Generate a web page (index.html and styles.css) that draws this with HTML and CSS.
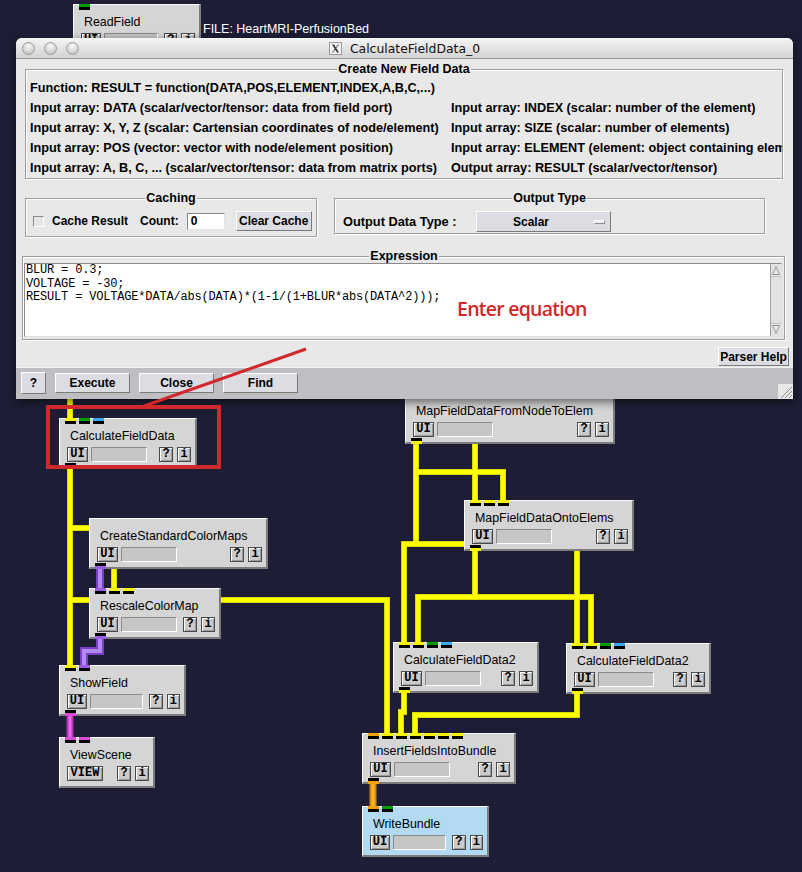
FILE: index.html
```html
<!DOCTYPE html>
<html>
<head>
<meta charset="utf-8">
<title>SCIRun network</title>
<link rel="stylesheet" href="styles.css">
</head>
<body>
<div class="canvas">
  <svg class="wires" width="802" height="872" viewBox="0 0 802 872">
    <defs>
      <path id="y1" d="M70 395V668"/>
      <path id="y2" d="M70 528H114V591"/>
      <path id="y3" d="M70 600H387V736"/>
      <path id="y4" d="M416 440V544H404V645"/>
      <path id="y5" d="M416 544H577V646"/>
      <path id="y6" d="M416 472H503V503"/>
      <path id="y7" d="M475 430V503"/>
      <path id="y8" d="M475 549V597H418V645"/>
      <path id="y9" d="M475 597H591V646"/>
      <path id="y10" d="M404 690V712H401V736"/>
      <path id="y11" d="M577 691V715H415V736"/>
      <path id="p1" d="M100 567V591"/>
      <path id="p2" d="M100 637V651H84V668"/>
      <path id="m1" d="M70 714V740"/>
      <path id="o1" d="M373 782V809"/>
    </defs>
    <g class="yo">
      <use href="#y1"/><use href="#y2"/><use href="#y3"/><use href="#y4"/><use href="#y5"/><use href="#y6"/>
      <use href="#y7"/><use href="#y8"/><use href="#y9"/><use href="#y10"/><use href="#y11"/>
    </g>
    <g class="yi">
      <use href="#y1"/><use href="#y2"/><use href="#y3"/><use href="#y4"/><use href="#y5"/><use href="#y6"/>
      <use href="#y7"/><use href="#y8"/><use href="#y9"/><use href="#y10"/><use href="#y11"/>
    </g>
    <g class="po"><use href="#p1"/><use href="#p2"/></g>
    <g class="pi"><use href="#p1"/><use href="#p2"/></g>
    <g class="mo"><use href="#m1"/></g>
    <g class="mi"><use href="#m1"/></g>
    <g class="oo"><use href="#o1"/></g>
    <g class="oi"><use href="#o1"/></g>
  </svg>

  <div class="filelabel" style="left:203px;top:22px">FILE: HeartMRI-PerfusionBed</div>

  <div class="mod" style="left:73px;top:4px;width:128px">
    <div class="ports top"><i class="p g"></i></div>
    <div class="mtitle">ReadField</div>
    <div class="mrow"><span class="mbtn ui">UI</span><span class="prog"></span><span class="fill"></span><span class="mbtn sq">?</span><span class="mbtn sq last">i</span></div>
  </div>

  <div class="mod" style="left:59px;top:418px;width:138px">
    <div class="ports top"><i class="p y"></i><i class="p g"></i><i class="p b"></i></div>
    <div class="mtitle">CalculateFieldData</div>
    <div class="mrow"><span class="mbtn ui">UI</span><span class="prog"></span><span class="fill"></span><span class="mbtn sq">?</span><span class="mbtn sq last">i</span></div>
    <div class="ports bot"><i class="p y"></i></div>
  </div>

  <div class="mod" style="left:89px;top:518px;width:179px">
    <div class="mtitle">CreateStandardColorMaps</div>
    <div class="mrow"><span class="mbtn ui">UI</span><span class="prog"></span><span class="fill"></span><span class="mbtn sq">?</span><span class="mbtn sq last">i</span></div>
    <div class="ports bot"><i class="p pu"></i></div>
  </div>

  <div class="mod" style="left:89px;top:588px;width:132px">
    <div class="ports top"><i class="p pu"></i><i class="p y"></i><i class="p y"></i></div>
    <div class="mtitle">RescaleColorMap</div>
    <div class="mrow"><span class="mbtn ui">UI</span><span class="prog"></span><span class="fill"></span><span class="mbtn sq">?</span><span class="mbtn sq last">i</span></div>
    <div class="ports bot"><i class="p pu"></i></div>
  </div>

  <div class="mod" style="left:59px;top:665px;width:127px">
    <div class="ports top"><i class="p y"></i><i class="p pu"></i></div>
    <div class="mtitle">ShowField</div>
    <div class="mrow"><span class="mbtn ui">UI</span><span class="prog"></span><span class="fill"></span><span class="mbtn sq">?</span><span class="mbtn sq last">i</span></div>
    <div class="ports bot"><i class="p m"></i></div>
  </div>

  <div class="mod" style="left:59px;top:737px;width:96px">
    <div class="ports top"><i class="p m"></i><i class="p m"></i></div>
    <div class="mtitle">ViewScene</div>
    <div class="mrow"><span class="mbtn view">VIEW</span><span class="fill"></span><span class="mbtn sq">?</span><span class="mbtn sq last">i</span></div>
  </div>

  <div class="mod" style="left:405px;top:393px;width:210px">
    <div class="mtitle">MapFieldDataFromNodeToElem</div>
    <div class="mrow"><span class="mbtn ui">UI</span><span class="prog"></span><span class="fill"></span><span class="mbtn sq">?</span><span class="mbtn sq last">i</span></div>
    <div class="ports bot"><i class="p y"></i></div>
  </div>

  <div class="mod" style="left:464px;top:500px;width:170px">
    <div class="ports top"><i class="p y"></i><i class="p y"></i><i class="p y"></i></div>
    <div class="mtitle">MapFieldDataOntoElems</div>
    <div class="mrow"><span class="mbtn ui">UI</span><span class="prog"></span><span class="fill"></span><span class="mbtn sq">?</span><span class="mbtn sq last">i</span></div>
    <div class="ports bot"><i class="p y"></i></div>
  </div>

  <div class="mod" style="left:393px;top:642px;width:146px">
    <div class="ports top"><i class="p y"></i><i class="p y"></i><i class="p g"></i><i class="p b"></i></div>
    <div class="mtitle">CalculateFieldData2</div>
    <div class="mrow"><span class="mbtn ui">UI</span><span class="prog"></span><span class="fill"></span><span class="mbtn sq">?</span><span class="mbtn sq last">i</span></div>
    <div class="ports bot"><i class="p y"></i></div>
  </div>

  <div class="mod" style="left:566px;top:643px;width:145px">
    <div class="ports top"><i class="p y"></i><i class="p y"></i><i class="p g"></i><i class="p b"></i></div>
    <div class="mtitle">CalculateFieldData2</div>
    <div class="mrow"><span class="mbtn ui">UI</span><span class="prog"></span><span class="fill"></span><span class="mbtn sq">?</span><span class="mbtn sq last">i</span></div>
    <div class="ports bot"><i class="p y"></i></div>
  </div>

  <div class="mod" style="left:362px;top:733px;width:154px">
    <div class="ports top"><i class="p o"></i><i class="p y"></i><i class="p y"></i><i class="p y"></i><i class="p y"></i><i class="p y"></i><i class="p y"></i></div>
    <div class="mtitle">InsertFieldsIntoBundle</div>
    <div class="mrow"><span class="mbtn ui">UI</span><span class="prog"></span><span class="fill"></span><span class="mbtn sq">?</span><span class="mbtn sq last">i</span></div>
    <div class="ports bot"><i class="p o"></i></div>
  </div>

  <div class="mod blue" style="left:362px;top:806px;width:127px">
    <div class="ports top"><i class="p o"></i><i class="p g"></i></div>
    <div class="mtitle">WriteBundle</div>
    <div class="mrow"><span class="mbtn ui">UI</span><span class="prog"></span><span class="fill"></span><span class="mbtn sq">?</span><span class="mbtn sq last">i</span></div>
  </div>

  <div class="dialog">
    <div class="titlebar">
      <div class="lights"><i class="light"></i><i class="light"></i><i class="light"></i></div>
      <div class="ttl">
        <svg class="xlogo" width="13" height="13" viewBox="0 0 13 13">
          <rect x="0.5" y="0.5" width="12" height="12" fill="#f2f2f2" stroke="#9a9a9a"/>
          <path d="M3 2.5h2l5 8h-2z" fill="#333"/>
          <path d="M9.5 2.5L3.5 10.5" stroke="#333" stroke-width="0.9"/>
        </svg>
        <span>CalculateFieldData_0</span>
      </div>
      <div class="tspace"></div>
    </div>
    <div class="dbody">
      <div class="box info">
        <div class="leg">Create New Field Data</div>
        <div class="infogrid">
          <div>Function: RESULT = function(DATA,POS,ELEMENT,INDEX,A,B,C,...)</div><div></div>
          <div>Input array: DATA (scalar/vector/tensor: data from field port)</div><div>Input array: INDEX (scalar: number of the element)</div>
          <div>Input array: X, Y, Z (scalar: Cartensian coordinates of node/element)</div><div>Input array: SIZE (scalar: number of elements)</div>
          <div>Input array: POS (vector: vector with node/element position)</div><div>Input array: ELEMENT (element: object containing element properties)</div>
          <div>Input array: A, B, C, ... (scalar/vector/tensor: data from matrix ports)</div><div>Output array: RESULT (scalar/vector/tensor)</div>
        </div>
      </div>
      <div class="row2">
        <div class="box caching">
          <div class="leg">Caching</div>
          <div class="crow">
            <span class="chk"></span>
            <span>Cache Result</span>
            <span class="cnt">Count:</span>
            <span class="count">0</span>
            <span class="btn cc">Clear Cache</span>
          </div>
        </div>
        <div class="box otype">
          <div class="leg">Output Type</div>
          <div class="orow">
            <span class="olabel">Output Data Type :</span>
            <span class="menubtn"><span>Scalar</span><i class="ind"></i></span>
          </div>
        </div>
      </div>
      <div class="box expr">
        <div class="leg">Expression</div>
        <div class="tbox">
<pre class="code">BLUR = 0.3;
VOLTAGE = -30;
RESULT = VOLTAGE*DATA/abs(DATA)*(1-1/(1+BLUR*abs(DATA^2)));</pre>
          <div class="sbar">
            <svg class="arr" width="10" height="12" viewBox="0 0 10 12"><path d="M1.5 10.5L5 2.5L8.5 10.5Z" fill="#e6e6e6" stroke="#9a9a9a"/></svg>
            <div class="trough"></div>
            <svg class="arr" width="10" height="12" viewBox="0 0 10 12"><path d="M1.5 1.5L5 9.5L8.5 1.5Z" fill="#e6e6e6" stroke="#9a9a9a"/></svg>
          </div>
        </div>
      </div>
      <div class="phrow"><span class="btn ph">Parser Help</span></div>
    </div>
    <div class="bbar">
      <span class="btn qb">?</span>
      <span class="btn bb">Execute</span>
      <span class="btn bb">Close</span>
      <span class="btn bb">Find</span>
      <svg class="grip" width="15" height="15" viewBox="0 0 15 15">
        <rect width="15" height="15" fill="#e8e8e9"/>
        <path d="M3 14L14 3M7 14L14 7M11 14L14 11" stroke="#8c8c8c" stroke-width="1"/>
      </svg>
    </div>
  </div>

  <svg class="annot" width="802" height="872" viewBox="0 0 802 872">
    <line x1="306" y1="349" x2="144" y2="406" stroke="#d1282c" stroke-width="3"/>
    <rect x="48" y="407" width="171" height="60" fill="none" stroke="#d1282c" stroke-width="4"/>
  </svg>
  <div class="note" style="left:457px;top:297px">Enter equation</div>
</div>
</body>
</html>
```

FILE: styles.css
```css
* { box-sizing: border-box; }
html, body { margin: 0; padding: 0; }
body {
  background: #1d1e35;
  width: 802px;
  height: 872px;
  overflow: hidden;
  font-family: "Liberation Sans", Arial, sans-serif;
}
.canvas { position: relative; width: 802px; height: 872px; }

/* wires */
.wires { position: absolute; left: 0; top: 0; }
.wires g { fill: none; stroke-linecap: butt; stroke-linejoin: miter; }
.yo { stroke: #d8d800; stroke-width: 6; }
.yi { stroke: #ffff00; stroke-width: 4; }
.po { stroke: #7c3fc8; stroke-width: 8; }
.pi { stroke: #b18af0; stroke-width: 4; }
.mo { stroke: #b531b5; stroke-width: 7; }
.mi { stroke: #e86ae8; stroke-width: 3; }
.oo { stroke: #d88a00; stroke-width: 7; }
.oi { stroke: #ffb52a; stroke-width: 3; }

.filelabel {
  position: absolute;
  color: #fff;
  font-size: 12.5px;
  line-height: 14px;
  white-space: nowrap;
}

/* modules */
.mod {
  position: absolute;
  height: 51px;
  background: #d5d5d5;
  border-style: solid;
  border-width: 1px 2px 2px 1px;
  border-color: #fafafa #7c7c7c #7c7c7c #fafafa;
  padding: 9px 4px 0 7px;
  font-size: 12.4px;
  color: #000;
}
.mod.blue { background: #b3daf3; }
.mtitle { height: 16px; line-height: 16px; padding-left: 3px; white-space: nowrap; }
.mrow { display: flex; margin-top: 3px; height: 15px; gap: 3px; }
.mbtn {
  height: 15px;
  border: 1px solid #4a4a4a;
  background: #cbcbcb;
  box-shadow: inset 1px 1px 0 #fff, inset -1px -1px 0 #9a9a9a;
  font: bold 12px/13px "Liberation Mono", monospace;
  text-align: center;
  color: #000;
}
.ui { width: 21px; }
.view { width: 36px; }
.sq { width: 14px; }
.last { margin-left: 1px; }
.prog {
  width: 56px;
  height: 15px;
  background: #c6c6c6;
  border: 1px solid;
  border-color: #8a8a8a #fff #fff #8a8a8a;
}
.fill { flex: 1; }
.ports { position: absolute; left: 5px; display: flex; gap: 3px; }
.ports.top { top: -1px; }
.ports.bot { bottom: -2px; }
.p { display: block; width: 11px; height: 6px; }
.top .p { border-bottom: 3px solid #000; }
.bot .p { border-top: 3px solid #000; }
.y { background: #f4f400; }
.g { background: #009c00; }
.b { background: #36a9f2; }
.pu { background: #9a5ce0; }
.m { background: #d84cd8; }
.o { background: #f5a300; }

/* dialog */
.dialog {
  position: absolute;
  left: 16px;
  top: 38px;
  width: 777px;
  height: 361px;
  background: #e8e8e9;
  border-radius: 6px 6px 0 0;
  box-shadow: 0 3px 10px rgba(0, 0, 0, .55);
  display: flex;
  flex-direction: column;
  overflow: hidden;
  font: bold 12px "Liberation Sans", Arial, sans-serif;
  color: #000;
}
.titlebar {
  height: 21px;
  flex: none;
  display: flex;
  align-items: center;
  background: linear-gradient(#f5f5f5, #d3d3d3);
  border-bottom: 1px solid #9a9a9a;
}
.lights { width: 80px; display: flex; gap: 9px; padding-left: 6px; }
.light {
  display: block;
  width: 13px;
  height: 13px;
  border-radius: 50%;
  background: radial-gradient(circle at 50% 30%, #fbfbfb, #cdcdcd 70%, #b9b9b9);
  border: 1px solid #9b9b9b;
}
.ttl {
  flex: 1;
  display: flex;
  justify-content: center;
  align-items: center;
  gap: 8px;
  font: 12.4px "DejaVu Sans", sans-serif;
  color: #111;
}
.xlogo { display: block; }
.tspace { width: 80px; }

.dbody { flex: none; display: flex; flex-direction: column; }
.box {
  border: 1px solid #9d9d9d;
  box-shadow: inset 1px 1px 0 #fff, 1px 1px 0 #fff;
}
.leg {
  display: table;
  margin: -8px auto 0;
  padding: 0 1px;
  background: #e8e8e9;
  line-height: 14px;
  font-size: 12.5px;
  white-space: nowrap;
}
.info { margin: 10px 0 0 9px; width: 758px; height: 110px; }
.infogrid {
  display: grid;
  grid-template-columns: 421px 1fr;
  margin-top: 2px;
  padding-left: 4px;
  font-size: 12.7px;
  line-height: 20px;
  white-space: nowrap;
}
.infogrid > div { overflow: hidden; }

.row2 { display: flex; align-items: flex-start; gap: 17px; margin: 19px 0 0 9px; }
.caching { width: 292px; height: 39px; }
.crow { display: flex; align-items: center; height: 20px; margin-top: 6px; padding-left: 7px; }
.chk {
  width: 11px;
  height: 11px;
  background: #e6e6e6;
  border: 1px solid;
  border-color: #8a8a8a #fff #fff #8a8a8a;
  margin-right: 8px;
}
.cnt { margin-left: 12px; }
.count {
  width: 38px;
  height: 17px;
  background: #fff;
  border: 1px solid;
  border-color: #8a8a8a #e4e4e4 #e4e4e4 #8a8a8a;
  margin-left: 8px;
  padding-left: 3px;
  line-height: 15px;
}
.btn {
  background: #dcdce3;
  border: 1px solid;
  border-color: #fff #7a7a7a #7a7a7a #fff;
  display: flex;
  align-items: center;
  justify-content: center;
  white-space: nowrap;
}
.cc { width: 76px; height: 20px; margin-left: 11px; }

.otype { width: 431px; height: 36px; }
.orow { display: flex; align-items: center; height: 21px; margin-top: 6px; padding-left: 8px; }
.olabel { width: 133px; font-size: 12.8px; }
.menubtn {
  width: 135px;
  height: 21px;
  background: #dcdce3;
  border: 1px solid;
  border-color: #fff #7a7a7a #7a7a7a #fff;
  display: flex;
  align-items: center;
  padding-left: 36px;
}
.ind {
  display: block;
  width: 11px;
  height: 4px;
  margin-left: auto;
  margin-right: 5px;
  background: #efeff3;
  border: 1px solid;
  border-color: #fff #8a8a8a #8a8a8a #fff;
}

.expr { margin: 19px 0 0 6px; width: 763px; height: 84px; padding-left: 1px; }
.tbox {
  display: flex;
  width: 758px;
  height: 74px;
  background: #fff;
  border: 1px solid;
  border-color: #8a8a8a #e0e0e0 #e0e0e0 #8a8a8a;
}
.code {
  flex: 1;
  margin: 0;
  padding: 0 0 0 1px;
  font: 12px/13.5px "Liberation Mono", monospace;
  letter-spacing: -0.18px;
  white-space: pre;
  color: #000;
}
.sbar {
  width: 11px;
  display: flex;
  flex-direction: column;
  border-left: 1px solid #a0a0a0;
  background: #e2e2e2;
}
.arr { display: block; }
.trough { flex: 1; border-top: 1px solid #c4c4c4; border-bottom: 1px solid #c4c4c4; }

.phrow { display: flex; justify-content: flex-end; margin-top: 7px; padding-right: 4px; }
.ph { width: 71px; height: 19px; }

.bbar {
  height: 32px;
  margin-top: auto;
  flex: none;
  background: #bfbfc3;
  border-top: 1px solid #f2f2f2;
  display: flex;
  align-items: flex-start;
  padding-left: 5px;
}
.qb { width: 25px; height: 22px; margin-top: 4px; }
.bb { width: 75px; height: 20px; margin-top: 5px; margin-left: 9px; }
.grip { margin-left: auto; align-self: flex-end; display: block; }

/* annotation */
.annot { position: absolute; left: 0; top: 0; }
.note {
  position: absolute;
  color: #d1282c;
  font: 600 19.5px/24px "Open Sans", sans-serif;
  letter-spacing: -0.75px;
  white-space: nowrap;
}
```
